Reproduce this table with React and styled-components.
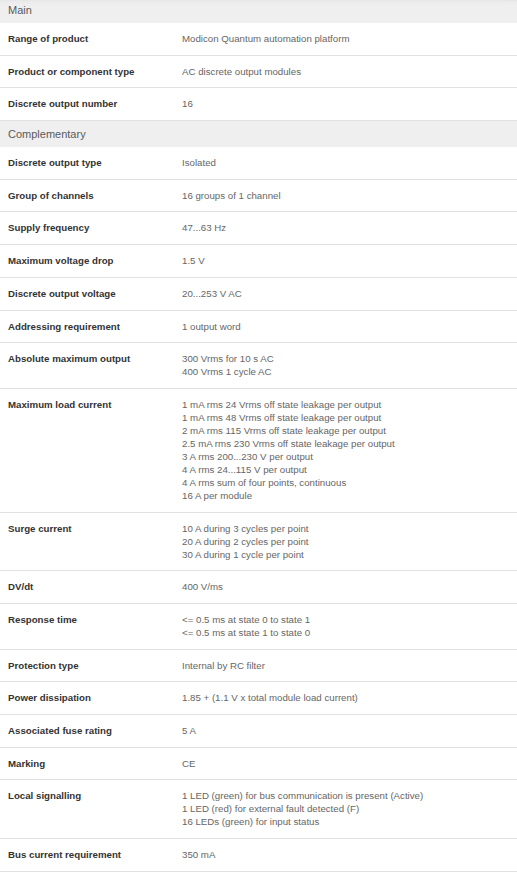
import React from "react";
import styled, { createGlobalStyle } from "styled-components";

const GlobalStyle = createGlobalStyle`
  html, body {
    margin: 0;
    padding: 0;
    background: #ffffff;
  }
  body {
    font-family: "Liberation Sans", Arial, sans-serif;
  }
`;

const sections = [
  {
    title: "Main",
    rows: [
      { label: "Range of product", values: ["Modicon Quantum automation platform"] },
      { label: "Product or component type", values: ["AC discrete output modules"] },
      { label: "Discrete output number", values: ["16"] },
    ],
  },
  {
    title: "Complementary",
    rows: [
      { label: "Discrete output type", values: ["Isolated"] },
      { label: "Group of channels", values: ["16 groups of 1 channel"] },
      { label: "Supply frequency", values: ["47...63 Hz"] },
      { label: "Maximum voltage drop", values: ["1.5 V"] },
      { label: "Discrete output voltage", values: ["20...253 V AC"] },
      { label: "Addressing requirement", values: ["1 output word"] },
      {
        label: "Absolute maximum output",
        values: ["300 Vrms for 10 s AC", "400 Vrms 1 cycle AC"],
      },
      {
        label: "Maximum load current",
        values: [
          "1 mA rms 24 Vrms off state leakage per output",
          "1 mA rms 48 Vrms off state leakage per output",
          "2 mA rms 115 Vrms off state leakage per output",
          "2.5 mA rms 230 Vrms off state leakage per output",
          "3 A rms 200...230 V per output",
          "4 A rms 24...115 V per output",
          "4 A rms sum of four points, continuous",
          "16 A per module",
        ],
      },
      {
        label: "Surge current",
        values: [
          "10 A during 3 cycles per point",
          "20 A during 2 cycles per point",
          "30 A during 1 cycle per point",
        ],
      },
      { label: "DV/dt", values: ["400 V/ms"] },
      {
        label: "Response time",
        values: ["<= 0.5 ms at state 0 to state 1", "<= 0.5 ms at state 1 to state 0"],
      },
      { label: "Protection type", values: ["Internal by RC filter"] },
      { label: "Power dissipation", values: ["1.85 + (1.1 V x total module load current)"] },
      { label: "Associated fuse rating", values: ["5 A"] },
      { label: "Marking", values: ["CE"] },
      {
        label: "Local signalling",
        values: [
          "1 LED (green) for bus communication is present (Active)",
          "1 LED (red) for external fault detected (F)",
          "16 LEDs (green) for input status",
        ],
      },
      { label: "Bus current requirement", values: ["350 mA"] },
    ],
  },
];

const Page = styled.div`
  width: 517px;
  margin-top: -3px;
  display: flex;
  flex-direction: column;
`;

const Section = styled.section`
  display: flex;
  flex-direction: column;
`;

const SectionHeader = styled.h2`
  margin: 0;
  height: 26px;
  display: flex;
  align-items: center;
  padding: 0 8px;
  background: ${(p) =>
    p.$first
      ? "linear-gradient(180deg, #dcdcdc 0px, #ececec 5px, #efefef 9px, #efefef 100%)"
      : "#efefef"};
  color: #5a5a5a;
  font-size: 11px;
  font-weight: 400;
  font-family: "Liberation Sans", Arial, sans-serif;
`;

const SpecTable = styled.div`
  display: flex;
  flex-direction: column;
`;

const SpecRow = styled.div`
  display: grid;
  grid-template-columns: 174px 1fr;
  padding: 9px 8px 9.7px 8px;
  border-bottom: 1px solid #e1e1e1;
  font-family: "Liberation Sans", Arial, sans-serif;
  font-size: 9.7px;
  line-height: 13px;
`;

const Label = styled.div`
  color: #333333;
  font-weight: 700;
  white-space: nowrap;
`;

const ValueList = styled.div`
  display: flex;
  flex-direction: column;
  color: #666666;
`;

const ValueLine = styled.div`
  white-space: nowrap;
`;

export default function App() {
  return (
    <>
      <GlobalStyle />
      <Page>
        {sections.map((section, i) => (
          <Section key={section.title}>
            <SectionHeader $first={i === 0}>{section.title}</SectionHeader>
            <SpecTable>
              {section.rows.map((row) => (
                <SpecRow key={row.label}>
                  <Label>{row.label}</Label>
                  <ValueList>
                    {row.values.map((v) => (
                      <ValueLine key={v}>{v}</ValueLine>
                    ))}
                  </ValueList>
                </SpecRow>
              ))}
            </SpecTable>
          </Section>
        ))}
      </Page>
    </>
  );
}
